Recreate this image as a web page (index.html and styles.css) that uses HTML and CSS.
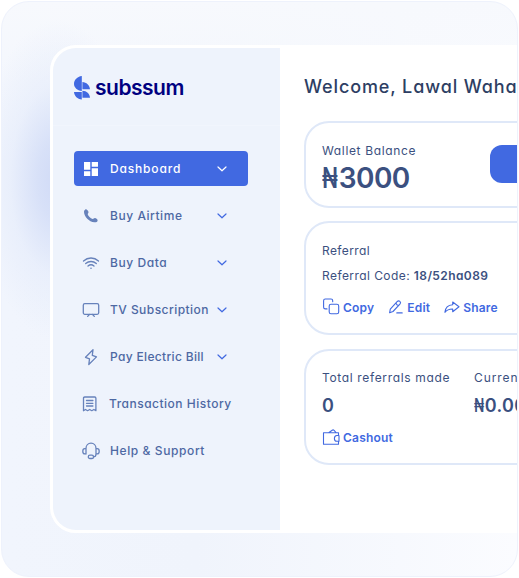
FILE: index.html
```html
<!DOCTYPE html>
<html lang="en">
<head>
<meta charset="utf-8">
<title>Subssum</title>
<link rel="stylesheet" href="styles.css">
</head>
<body>
<svg width="0" height="0" class="defs" aria-hidden="true">
  <symbol id="chevron" viewBox="0 0 10 6"><path d="M1 1l4 3.800L9 1" fill="none" stroke="currentColor" stroke-width="1.200" stroke-linecap="round" stroke-linejoin="round"/></symbol>
</svg>
<div class="scene">
  <div class="window">
    <aside class="sidebar">
      <div class="brand">
        <svg class="brand-mark" viewBox="0 0 16 24" fill="#4169e1"><path d="M7.800 0v15C3.200 14.500 0 11.500 0 7.700S3.200.6 7.800 0Z"/><path d="M8.400 6c4 .2 7.400 3.300 7.600 7.300H8.400ZM0 16h7.800v7.500C3.500 23.300.3 20 0 16ZM8.400 14.800c4.300.2 7.300 3 7.600 7H8.400Z"/></svg>
        <span class="brand-name">subssum</span>
      </div>
      <nav class="nav">
        <a class="item active"><svg class="icon" viewBox="0 0 18 18" fill="currentColor"><path d="M2 2h6.300v7.800H2zM9.700 2H16v4.700H9.700zM2 11.300h6.300V16H2zM9.700 8.200H16V16H9.700z"/></svg><span class="t-dash">Dashboard</span><svg class="chev"><use href="#chevron"/></svg></a>
        <a class="item"><svg class="icon" viewBox="0 0 18 18" fill="currentColor"><path d="M3.300 2.400C4.500 1.700 6.200 3.600 6.500 5c.2.900-.8 1.500-.8 2.200.6 1.900 2.700 3.900 4.900 4.700.9.200 1.400-1 2.300-.9 1.300.2 3.100 1.500 2.700 2.800-.3 1.100-1.700 1.700-3.200 1.500C7 14.600 2.200 9.600 2 4.900c0-1.100.5-2 1.300-2.500Z"/></svg><span class="t-air">Buy Airtime</span><svg class="chev"><use href="#chevron"/></svg></a>
        <a class="item"><svg class="icon line" viewBox="0 0 18 18"><path d="M1.500 7c4.400-4 10.600-4 15 0M3.700 9.600c3.100-2.800 7.500-2.800 10.600 0M6 12c1.800-1.500 4.200-1.500 6 0"/><circle cx="9" cy="14.200" r=".8" fill="currentColor" stroke="none"/></svg><span class="t-data">Buy Data</span><svg class="chev"><use href="#chevron"/></svg></a>
        <a class="item"><svg class="icon line" viewBox="0 0 18 18"><rect x="1.300" y="2.700" width="15.400" height="10.600" rx="1.500"/><path d="M7.400 13.500l-1.700 1.900M10.600 13.500l1.700 1.900"/></svg><span class="t-tv">TV Subscription</span><svg class="chev"><use href="#chevron"/></svg></a>
        <a class="item"><svg class="icon line" viewBox="0 0 18 18"><path d="M11 1.700L3.500 9.300l4 1.500-.7 5.700 7.700-7.600-4.200-1.600Z"/></svg><span class="t-bill">Pay Electric Bill</span><svg class="chev"><use href="#chevron"/></svg></a>
        <a class="item"><svg class="icon line" viewBox="0 0 18 18"><path d="M1.500 15.700V3.200c0-.8.400-1.200 1.200-1.200h10c.8 0 1.200.4 1.200 1.200v12.500l-2-1.200-2.100 1.200-2.100-1.200-2.100 1.200-2.100-1.200ZM4.500 5.500h6.400M4.500 8.300h6.400M4.500 11h6.400"/></svg><span class="t-hist">Transaction History</span></a>
        <a class="item"><svg class="icon line" viewBox="0 0 18 18"><path d="M4 12V6.500C4 3.500 6.200 1.200 9 1.200s5 2.300 5 5.300V12M4 6.700H2.800C1.500 6.700.8 7.700.8 9.200s.7 2.700 2 2.700H4M14 6.700h1.200c1.300 0 2 1 2 2.500s-.7 2.700-2 2.700H14c0 1.800-.9 2.900-2.500 2.900"/><rect x="6.300" y="13.200" width="5.200" height="3.300" rx="1.600"/></svg><span class="t-help">Help &amp; Support</span></a>
      </nav>
    </aside>
    <main class="main">
      <h1 class="title">Welcome, Lawal Waha</h1>
      <section class="card wallet">
        <div><div class="label t-wallet">Wallet Balance</div><div class="balance"><span class="naira">₦</span>3000</div></div>
        <div class="cta"></div>
      </section>
      <section class="card referral">
        <div class="label t-ref">Referral</div>
        <div class="label code"><span class="t-code">Referral Code:</span> <b>18/52ha089</b></div>
        <div class="actions">
          <a class="action copy"><svg viewBox="0 0 18 18"><path d="M5 10.900H3.300c-1 0-1.700-.7-1.700-1.700V2.700c0-1 .7-1.700 1.700-1.700H9c1 0 1.700.7 1.700 1.700v1"/><rect x="7.200" y="6.200" width="9.500" height="9.500" rx="1.800"/></svg><span>Copy</span></a>
          <a class="action edit"><svg viewBox="0 0 18 18"><path d="M2.600 14.800l.7-3.700 6.800-7.400c1.900-2 4.600.5 2.800 2.500L6 13.500ZM9 5.100c.4 1.500 1.300 2.200 2.700 2.500M9.800 14.900h5.400"/></svg><span>Edit</span></a>
          <a class="action share"><svg viewBox="0 0 18 18"><path d="M9.700 4v2.700C5 7 2.300 9.600 1.900 14.300c2-2.500 4.200-3.400 7.800-3.300v2.700L16 8.700Z"/></svg><span>Share</span></a>
        </div>
      </section>
      <section class="card totals">
        <div class="stats">
          <div class="stat first"><div class="label t-total">Total referrals made</div><div class="value">0</div></div>
          <div class="stat"><div class="label t-cur">Curren</div><div class="value"><span class="naira">₦</span>0.00</div></div>
        </div>
        <a class="action cash"><svg viewBox="0 0 18 18"><path d="M16.500 7.500V4.700H1.500v11.600h15v-3M7 4.500l3.200-2.300c.7-.5 1.300-.4 1.900.1L14 4.500M17 7.500h-2.200c-3.200.2-3.200 5.600 0 5.800H17Z"/></svg><span>Cashout</span></a>
      </section>
    </main>
  </div>
</div>
</body>
</html>
```
FILE: styles.css
```css
* { box-sizing: border-box; }
body { margin: 0; width: 519px; height: 578px; overflow: hidden; background: #fff; padding: 1px; font-family: Inter, "Liberation Sans", sans-serif; color: #3b5080; font-feature-settings: "cv11"; }
.defs { position: absolute; }
.scene { width: 517px; height: 576px; border: 1px solid #eef2fc; border-radius: 28px; overflow: hidden; padding: 43px 0 0 48px;
  background: radial-gradient(ellipse 80px 160px at 56px 178px, #d0daf6 0%, rgba(211,221,247,.85) 25%, rgba(224,232,250,.45) 60%, rgba(240,244,253,0) 100%),
    linear-gradient(180deg, #f7f9fd 0%, rgba(247,249,253,0) 28%),
    linear-gradient(90deg, #f1f5fd 0%, #f0f4fc 38%, #fbfcff 100%); }
.window { width: 600px; height: 488px; border: 3px solid #fff; border-radius: 26px; background: #fff; display: flex; overflow: hidden; }
.sidebar { width: 227px; flex: none; background: #eef3fc; }
.brand { display: flex; align-items: center; height: 78px; padding: 3px 0 0 21px; gap: 5px; border-bottom: 1px solid #f1f5fd; }
.brand-mark { width: 16px; height: 24px; flex: none; }
.brand-name { font-size: 21px; line-height: 24px; font-weight: 600; color: #000080; letter-spacing: -.5px; }
.nav { display: flex; flex-direction: column; gap: 12px; margin: 25.400px 0 0 21px; }
.item { display: flex; align-items: center; width: 174px; height: 35px; padding-left: 8px; border-radius: 4px; color: #6782bb; font-size: 12px; font-weight: 500; white-space: nowrap; }
.item span { width: 107px; margin-left: 10px; color: #4d68a3; letter-spacing: .45px; }
.icon { width: 18px; height: 18px; flex: none; }
.line { fill: none; stroke: currentColor; stroke-width: 1.3; stroke-linejoin: round; stroke-linecap: round; }
.chev { width: 10px; height: 6px; flex: none; color: #4169e1; }
.item.active { background: #4169e1; color: #fff; }
.item.active span, .active .chev { color: #fff; }
.item .t-dash { letter-spacing: .83px; }
.item .t-air { letter-spacing: .55px; }
.item .t-data { letter-spacing: .57px; }
.item .t-bill { letter-spacing: .33px; }
.item .t-hist { margin-left: 9px; letter-spacing: .5px; }
.item .t-help { letter-spacing: .6px; }
.main { flex: none; width: 370px; padding: 25px 0 0 24px; }
.title { margin: 0; height: 28px; font-size: 18px; line-height: 28px; font-weight: 500; letter-spacing: .88px; color: #2d3e63; white-space: nowrap; }
.card { width: 340px; border: 2px solid #dfe8f8; border-radius: 25px; padding-left: 16px; }
.label { font-size: 12px; line-height: 18px; letter-spacing: .4px; white-space: nowrap; }
.t-wallet, .t-total { letter-spacing: .65px; }
.t-code { letter-spacing: .43px; }
.t-cur { letter-spacing: .9px; }
.wallet { margin-top: 20px; height: 87px; padding-top: 19px; display: flex; }
.wallet > div:first-child { width: 168px; }
.balance { font-size: 28px; line-height: 34px; font-weight: 600; margin-top: 1px; letter-spacing: -.6px; }
.naira { display: inline-block; width: .6em; transform: scaleX(.74); transform-origin: 0 50%; }
.cta { width: 120px; height: 38px; margin-top: 3px; background: #4169e1; border-radius: 12px; }
.referral { margin-top: 13px; height: 114px; padding-top: 19px; }
.code { margin-top: 7px; }
.code b { font-weight: 600; }
.actions { display: flex; margin-top: 13px; gap: 13px; }
.action { display: flex; align-items: center; gap: 3px; height: 18px; font-size: 12px; font-weight: 600; color: #4169e1; letter-spacing: .2px; font-feature-settings: normal; }
.edit, .share { gap: 2px; }
.action svg { width: 18px; height: 18px; fill: none; stroke: currentColor; stroke-width: 1.1; stroke-linecap: round; stroke-linejoin: round; }
.totals { margin-top: 14px; height: 116px; padding-top: 18px; }
.stats { display: flex; }
.first { width: 152px; flex: none; }
.value { font-size: 18px; line-height: 24px; font-weight: 600; margin-top: 7px; letter-spacing: .3px; white-space: nowrap; }
.cash { margin-top: 10px; }
```
